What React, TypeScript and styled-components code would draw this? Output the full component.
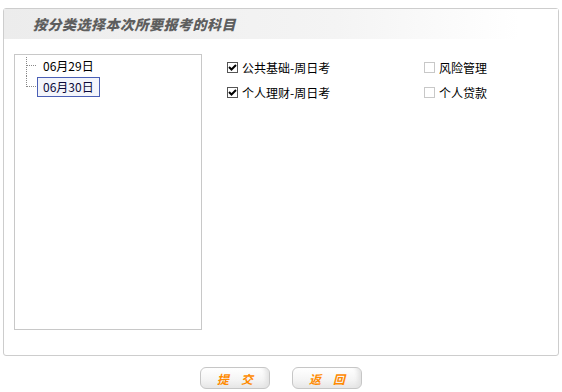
import styled, { createGlobalStyle } from "styled-components";

const GlobalStyle = createGlobalStyle`
  html, body {
    margin: 0;
    padding: 0;
    background: #fff;
    font-family: "Liberation Sans", "Noto Sans CJK SC", sans-serif;
    font-size: 12px;
    color: #000;
  }
`;

interface CheckProps {
  checked: boolean;
}

const subjects = [
  { label: "公共基础-周日考", checked: true },
  { label: "风险管理", checked: false },
  { label: "个人理财-周日考", checked: true },
  { label: "个人贷款", checked: false },
];

const App = () => {
  return (
    <Page>
      <GlobalStyle />
      <Panel>
        <Header>按分类选择本次所要报考的科目</Header>
        <Body>
          <TreeBox>
            <TreeList>
              <TreeItem>
                <TreeText>06月29日</TreeText>
              </TreeItem>
              <TreeItem last>
                <TreeText selected>06月30日</TreeText>
              </TreeItem>
            </TreeList>
          </TreeBox>
          <Subjects>
            {subjects.map((item, index) => (
              <Subject key={index}>
                <Box checked={item.checked}>
                  {item.checked && (
                    <svg width="9" height="9" viewBox="0 0 9 9">
                      <path d="M1 4 L3.5 6.5 L8 2" stroke="#000" strokeWidth="2" fill="none" />
                    </svg>
                  )}
                </Box>
                <Label checked={item.checked}>{item.label}</Label>
              </Subject>
            ))}
          </Subjects>
        </Body>
      </Panel>
      <Buttons>
        <Button>提　交</Button>
        <Button>返　回</Button>
      </Buttons>
    </Page>
  );
};

export default App;

const Page = styled.div`
  width: 562px;
  height: 392px;
  padding: 8px 3px 0 3px;
  box-sizing: border-box;
`;

const Panel = styled.div`
  height: 348px;
  border: 1px solid #cdcdcd;
  border-radius: 3px;
  box-sizing: border-box;
  display: flex;
  flex-direction: column;
`;

const Header = styled.div`
  height: 30px;
  line-height: 30px;
  padding-left: 29px;
  background: linear-gradient(to right, #ececec 0%, #f4f4f4 60%, #fff 93%);
  color: #5e5e5e;
  font-family: "Noto Sans CJK SC", sans-serif;
  font-size: 14px;
  letter-spacing: 0.5px;
  font-weight: 900;
  font-style: italic;
`;

const Body = styled.div`
  display: flex;
  padding: 15px 10px 0 10px;
`;

const TreeBox = styled.div`
  width: 188px;
  height: 276px;
  border: 1px solid #c8c8c8;
  box-sizing: border-box;
  padding: 0 0 0 11px;
`;

const TreeList = styled.ul`
  margin: 0;
  padding: 0;
  list-style: none;
`;

const TreeItem = styled.li<{ last?: boolean }>`
  position: relative;
  height: 21px;
  padding-left: 11px;
  display: flex;
  align-items: center;

  &::before {
    content: "";
    position: absolute;
    left: 0;
    top: ${(props) => (props.last ? "0" : "2px")};
    height: ${(props) => (props.last ? "11px" : "19px")};
    border-left: 1px dotted #888;
  }

  &::after {
    content: "";
    position: absolute;
    left: 1px;
    top: 10px;
    width: 9px;
    border-top: 1px dotted #888;
  }
`;

const TreeText = styled.span<{ selected?: boolean }>`
  font-family: "Noto Sans CJK SC", sans-serif;
  font-size: 12px;
  line-height: 16px;
  padding: 1px 5px;
  color: ${(props) => (props.selected ? "#0a0a3a" : "#000")};
  border: 1px solid ${(props) => (props.selected ? "#4a5fb5" : "transparent")};
  background: ${(props) => (props.selected ? "#f3f5fb" : "transparent")};
`;

const Subjects = styled.div`
  display: grid;
  grid-template-columns: 197px 120px;
  grid-auto-rows: 25px;
  padding: 1px 0 0 25px;
`;

const Subject = styled.label`
  display: flex;
  align-items: center;
  gap: 4px;
`;

const Box = styled.span<CheckProps>`
  width: 11px;
  height: 11px;
  box-sizing: border-box;
  border: 1px solid ${(props) => (props.checked ? "#555" : "#c8c8c8")};
  background: #fff;
  display: flex;
  align-items: center;
  justify-content: center;
`;

const Label = styled.span<CheckProps>`
  font-family: "Noto Sans CJK SC", sans-serif;
  font-size: 12px;
  color: #000;
`;

const Buttons = styled.div`
  display: flex;
  justify-content: center;
  gap: 22px;
  padding: 11px 0 0 0;
`;

const Button = styled.button`
  width: 70px;
  height: 22px;
  border: 1px solid #c6c6c6;
  border-radius: 6px;
  background: linear-gradient(to bottom, #fff 0%, #f4f4f4 60%, #e6e6e6 100%);
  box-shadow: inset -6px 0 4px -3px #e2e2e2;
  color: #ff8a00;
  font-family: "Noto Sans CJK SC", sans-serif;
  font-size: 12px;
  font-weight: bold;
  font-style: italic;
  padding: 0;
  cursor: pointer;
`;
